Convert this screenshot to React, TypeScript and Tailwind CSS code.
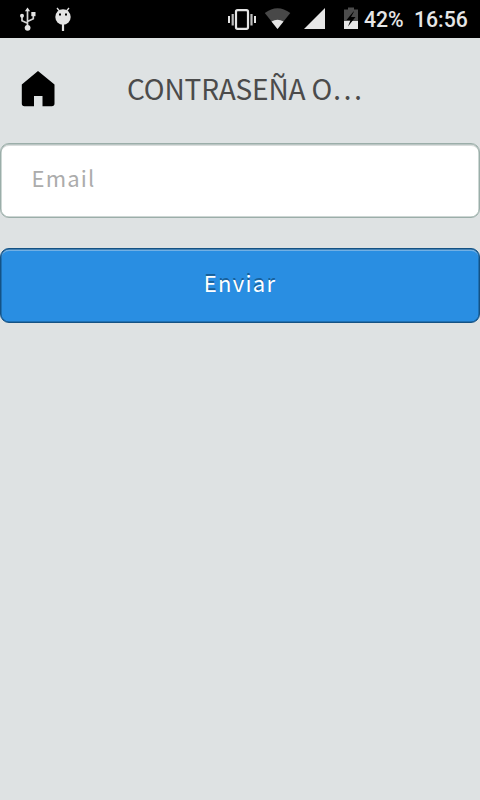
import React from "react";

function StatusBar() {
  return (
    <div className="flex h-[38px] w-full bg-black">
      <svg className="h-[38px] w-[360px] shrink-0" viewBox="0 0 360 38" fill="none">
        <g stroke="#d4d4d4" strokeWidth="1.7">
          <path d="M27.5 11v16M27.5 23.2L22 20.8V16M27.5 21.500L33.300 18.800V14" />
        </g>
        <g fill="#e4e4e4">
          <path d="M27.500 7.500l2.600 3.800h-5.200z" />
          <circle cx="27.600" cy="27.800" r="2.900" />
          <circle cx="22" cy="15.800" r="2" />
          <path d="M31.300 12h4.200v4.200h-4.200z" />
          <circle cx="63" cy="17" r="7.700" />
          <path d="M61.900 24h2.200v7h-2.200z" />
        </g>
        <path d="M59.500 11l-2.500-3M66.500 11l2.500-3" stroke="#e4e4e4" strokeWidth="1.300" />
        <path d="M59 13.500h2v2h-2zM65 13.500h2v2h-2z" fill="#000" />
        <rect x="236" y="10.200" width="12" height="18.600" rx="1.500" stroke="#e4e4e4" strokeWidth="2.200" />
        <path d="M232.700 14v11.500M251.500 14v11.500" stroke="#bdbdbd" strokeWidth="2.200" />
        <path d="M229 16v7M255 16v7" stroke="#e4e4e4" strokeWidth="2" />
        <path d="M264.800 12.900Q277.500 3.500 290.300 12.900L277.500 29z" fill="#484848" />
        <path d="M271.500 21.400Q277.500 18 283.500 21.400L277.500 29z" fill="#e6e6e6" />
        <path d="M325 8v21h-21z" fill="#e6e6e6" />
        <path d="M344 9.500h4v-2h6v2h4V21h-14z" fill="#4c4c4c" />
        <path d="M344 21h14v8h-14z" fill="#e6e6e6" />
        <path d="M353.500 11.500l-7 8.500h4l-2.500 6.500 7.500-9.500h-4.500l3-5.500z" fill="#000" />
      </svg>
      <div className="-ml-[1px] flex items-center whitespace-pre pl-[5px] pt-[2px] font-['Roboto',sans-serif] text-[21.200px] font-medium leading-[36px] text-[#e6e6e6]">
        <span className="w-[50px]">42%</span>
        <span>16:56</span>
      </div>
    </div>
  );
}

export default function App() {
  return (
    <main className="flex h-[800px] w-[480px] flex-col overflow-hidden bg-[#dee2e3] font-['Noto_Sans_CJK_SC','Noto_Sans',sans-serif]">
      <StatusBar />
      <header className="flex h-[105px] shrink-0">
        <button className="flex h-[105px] w-[127px] pl-[21px] pt-[33px]" aria-label="Inicio">
          <svg width="34" height="36" viewBox="0 0 34 36">
            <path d="M17 0L33.500 13.500V32.500Q33.500 35.200 30.800 35.200H21.500V25H13V35.200H3.500Q.8 35.200 .8 32.500V13.500z" fill="#000" />
          </svg>
        </button>
        <h1 className="w-[240px] whitespace-nowrap pt-[30px] text-[28px] font-normal leading-[40px] tracking-[-0.150px] text-[#4b4b4b]">
          CONTRASEÑA O…
        </h1>
      </header>
      <form className="flex flex-col gap-[30px]" onSubmit={(e) => e.preventDefault()}>
        <input
          type="email"
          aria-label="Email"
          placeholder="Email"
          className="h-[75px] w-full rounded-[9px] border border-[#9baea9] bg-white pl-[30.500px] pr-[30px] pb-[7px] text-[22px] tracking-[1.200px] shadow-[inset_0_0_0_0.500px_#9baea9,inset_0_2px_0_#d9dddc] outline-none placeholder:text-[#acacac] placeholder:opacity-100"
        />
        <button className="h-[75px] w-full rounded-[9px] border border-[#145284] bg-[#298ee2] pb-[6px] text-[22px] tracking-[1.300px] text-white shadow-[inset_0_0_0_0.500px_#145284,inset_0_2px_0_#72b0e4] [text-shadow:0_-2px_0_#145284cc]">
          Enviar
        </button>
      </form>
    </main>
  );
}
